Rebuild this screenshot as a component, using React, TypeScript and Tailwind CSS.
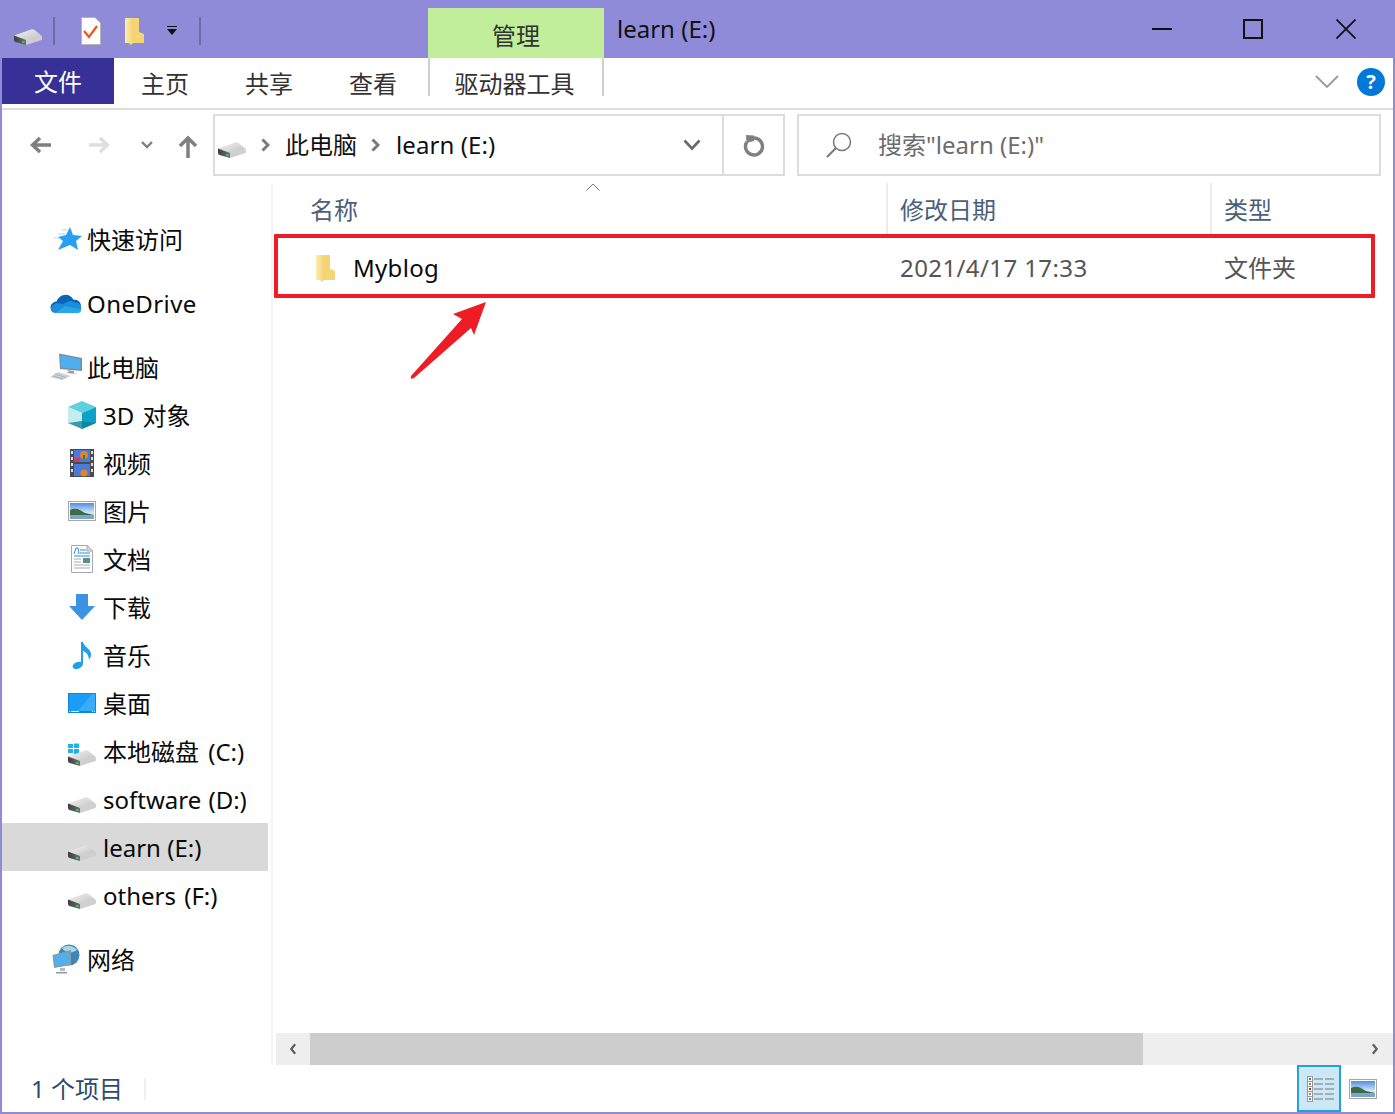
import React from "react";

const Drive = ({ className = "" }: { className?: string }) => (
  <svg viewBox="0 0 28 16" className={`w-[28px] h-[16px] shrink-0 ${className}`}>
    <defs>
      <linearGradient id="dtop" x1="0" y1="0" x2="1" y2="1">
        <stop offset="0" stopColor="#f4f4f4" />
        <stop offset="1" stopColor="#bdbdbd" />
      </linearGradient>
      <linearGradient id="dfront" x1="0" y1="0" x2="1" y2="0">
        <stop offset="0" stopColor="#3e3e3e" />
        <stop offset="1" stopColor="#6e6e6e" />
      </linearGradient>
    </defs>
    <path d="M0 6.500 L17 0.500 Q19 0 20.500 1 L28 7 L12 12 Z" fill="url(#dtop)" />
    <path d="M0 6.500 L12 11 V16 L1.500 13 Q0 12.500 0 11 Z" fill="url(#dfront)" />
    <path d="M12 11 L28 7 V10 Q28 11 26 11.500 L12 16 Z" fill="#cfcfcf" />
    <rect x="8" y="12" width="2.500" height="2" fill="#36c75a" />
  </svg>
);

const Folder = ({ className = "" }: { className?: string }) => (
  <svg viewBox="0 0 20 28" className={`shrink-0 ${className}`}>
    <defs>
      <linearGradient id="fold" x1="0" y1="0" x2="1" y2="0">
        <stop offset="0" stopColor="#fdeeb0" />
        <stop offset="1" stopColor="#f3cf6c" />
      </linearGradient>
    </defs>
    <path d="M7 1 H14 V15 L19 17 V26 H7 Z" fill="#f5d473" />
    <path d="M0 1 H8 L9 25 L6 28 L4 26 H0 Z" fill="url(#fold)" />
  </svg>
);

const Star = () => (
  <svg viewBox="0 0 30 24" className="w-[30px] h-[24px] ml-[3px]">
    <path d="M17 0 L20 8 L29 9 L23 14 L25 23 L17 18 L5 23 L10 14 L5 10 L13 8 Z" fill="#2a9ff0" />
    <path d="M9 3h5M5 7h7M1 11h5" stroke="#a9d6f6" strokeWidth="1" />
  </svg>
);

const Cloud = () => (
  <svg viewBox="0 0 34 22" className="w-[32px] h-[21px]">
    <path d="M7 9 C9 2 20 -2 25 7 C30 7 32 9 33 13 L16 20 L4 20 C-1 19 -1 10 7 9 Z" fill="#0a64b8" />
    <path d="M14 12 C18 8 23 7 26 10 C31 10 34 13 33 17 C33 20 31 21 28 21 L6 21 C1 21 0 17 2 14 C5 10 10 10 14 12 Z" fill="#1a8fdc" />
    <path d="M6 21 L28 21 C31 21 33 20 33 17 L16 14 Z" fill="#2ba6ea" />
  </svg>
);

const Pc = () => (
  <svg viewBox="0 0 32 28" className="w-[32px] h-[28px]">
    <path d="M9 0.500 L32 5 V18 L10 16 Z" fill="#7d8a96" />
    <path d="M10 2 L30.500 6 V16.500 L11 14.500 Z" fill="#4eaff0" />
    <path d="M17 17 L24 18 V20 L27 21 L16 20 L19 19 Z" fill="#9aa0a6" />
    <path d="M8 19 L21 23 L12 27 L0 24 Z" fill="#cfd3d6" />
    <path d="M5 21 L16 24.500 M3 23 L13 26" stroke="#a9aeb3" strokeWidth="1" />
  </svg>
);

const Cube = () => (
  <svg viewBox="0 0 28 28" className="w-[28px] h-[28px]">
    <path d="M14 0 L28 6 L14 12 L0 6 Z" fill="#5fd0de" />
    <path d="M0 6 L14 12 V28 L0 22 Z" fill="#c3edef" />
    <path d="M14 12 L28 6 V22 L14 28 Z" fill="#0da3c8" />
    <path d="M14 20 L28 22 L14 28 L0 22 Z" fill="#0b7d98" opacity=".75" />
  </svg>
);

const Film = () => (
  <svg viewBox="0 0 24 28" className="w-[24px] h-[28px]">
    <rect width="24" height="28" fill="#4b4b4b" />
    <path d="M1 2h2v3H1zM1 8h2v3H1zM1 14h2v3H1zM1 20h2v3H1zM21 2h2v3h-2zM21 8h2v3h-2zM21 14h2v3h-2zM21 20h2v3h-2z" fill="#ddd" />
    <rect x="4" y="1" width="16" height="12" fill="#4b7bd8" />
    <rect x="4" y="15" width="16" height="12" fill="#4b7bd8" />
    <circle cx="14" cy="6" r="4" fill="#e0852a" />
    <path d="M13 6h2v4h-2z" fill="#2e7d3a" />
    <circle cx="14" cy="24" r="3.500" fill="#e0852a" />
    <rect x="4" y="9" width="6" height="4" fill="#c83d6a" />
  </svg>
);

const Picture = () => (
  <svg viewBox="0 0 28 20" className="w-[28px] h-[20px]">
    <defs>
      <linearGradient id="sky" x1="0" y1="0" x2="0" y2="1">
        <stop offset="0" stopColor="#4f8fe0" />
        <stop offset=".6" stopColor="#cfe4f6" />
      </linearGradient>
    </defs>
    <rect x=".5" y=".5" width="27" height="19" fill="#fff" stroke="#a6a6a6" />
    <rect x="2" y="2" width="24" height="16" fill="url(#sky)" />
    <path d="M2 9 C8 6 12 9 17 12 L26 14 H2 Z" fill="#3c6a4a" />
    <rect x="2" y="14" width="24" height="4" fill="#7da5ca" />
  </svg>
);

const Doc = () => (
  <svg viewBox="0 0 22 28" className="w-[22px] h-[28px]">
    <path d="M.5 .5 H16 L21.500 6 V27.500 H.5 Z" fill="#fff" stroke="#a8a8a8" />
    <path d="M16 .5 V6 H21.500 Z" fill="#ddd" stroke="#a8a8a8" />
    <path d="M3 9 L5 3 H7 L8 9" fill="none" stroke="#2a8fe0" strokeWidth="1" />
    <path d="M9 5h6M9 8h10M3 11h16" stroke="#2a8fe0" strokeWidth="1" />
    <path d="M3 14h7M3 17h7M3 20h16M3 23h16" stroke="#aaa" strokeWidth="1" />
    <rect x="12" y="13" width="7" height="5" fill="#5b8f86" />
  </svg>
);

const Down = () => (
  <svg viewBox="0 0 26 26" className="w-[26px] h-[26px]">
    <path d="M7 0 H19 V12 H26 L13 26 L0 12 H7 Z" fill="#3d93e3" />
  </svg>
);

const Note = () => (
  <svg viewBox="0 0 20 28" className="w-[20px] h-[28px]">
    <path d="M9 1 H11 C12 6 19 8 19 13 C19 16 18 17 17 19 C17 14 14 11 11 10 V22 C11 26 7 28 4 28 C1 28 0 26 1 24 C2 22 6 20 9 21 Z" fill="#1ea0ea" />
  </svg>
);

const Desk = () => (
  <svg viewBox="0 0 28 20" className="w-[28px] h-[20px]">
    <rect width="28" height="20" fill="#0f86d8" />
    <rect x="1" y="1" width="26" height="17" fill="#1a9cf7" />
    <path d="M10 18 L24 1 H27 V18 Z" fill="#3bacf9" />
    <path d="M1 18.500h1M3 18.500h8M24 18.500h1M26 18.500h1" stroke="#fff" strokeWidth="1" />
  </svg>
);

const WinDrive = () => (
  <div className="relative w-[28px] h-[28px] shrink-0">
    <svg viewBox="0 0 12 12" className="absolute left-0 top-[6px] w-[12px] h-[12px]">
      <path d="M0 1 H5 V5 H0 Z M6 0.500 H11 V5 H6 Z M0 6 H5 V10 H0 Z M6 6 H11 V11 H6 Z" fill="#17b4ee" />
    </svg>
    <Drive className="absolute left-0 -bottom-[1px]" />
  </div>
);

const Net = () => (
  <svg viewBox="0 0 28 30" className="w-[28px] h-[30px] ml-[2px]">
    <circle cx="17" cy="11" r="10.500" fill="#3e86b8" />
    <path d="M10 4 C15 0 22 2 25 6 C20 10 13 9 10 4 Z" fill="#a9d4ea" />
    <path d="M0.500 11 L19 6 V21 L2 24 Z" fill="#8e99a2" />
    <path d="M2 12 L17.500 8 V19.500 L3 22.500 Z" fill="#4eb1ee" />
    <path d="M8 24 H13 V27 H8 Z" fill="#b6bcc2" />
    <path d="M4 28 H15 V29.500 H4 Z" fill="#8e99a2" />
  </svg>
);

const navItem = "flex items-center h-[48px] text-[24px] text-[#0a0a0a] leading-none";

const NavRow = ({
  icon,
  label,
  sub,
  selected,
  labelClass = "",
}: {
  icon: React.ReactNode;
  label: string;
  sub?: boolean;
  selected?: boolean;
  labelClass?: string;
}) => (
  <div className={`${navItem} ${selected ? "bg-[#d9d9d9]" : ""} ${sub ? "pl-[66px]" : "pl-[48px]"}`}>
    <div className={`h-[32px] flex items-center shrink-0 ${sub ? "w-[28px] mr-[7px] justify-center" : "w-[37px] justify-start"}`}>
      {icon}
    </div>
    <span className={`whitespace-nowrap pt-[2px] ${labelClass}`}>{label}</span>
  </div>
);

const BackArrow = ({ color, flip }: { color: string; flip?: boolean }) => (
  <svg viewBox="0 0 24 20" className={`w-[24px] h-[20px] ${flip ? "-scale-x-100" : ""}`}>
    <path d="M22 10 H4 M11 3 L3.500 10 L11 17" fill="none" stroke={color} strokeWidth="3.500" />
  </svg>
);

const Chevron = ({ className = "" }: { className?: string }) => (
  <svg viewBox="0 0 9 14" className={`w-[9px] h-[14px] ${className}`}>
    <path d="M1.500 1.500 L7 7 L1.500 12.500" fill="none" stroke="#7a7a7a" strokeWidth="3" />
  </svg>
);

export default function App() {
  return (
    <div className="relative w-[1395px] h-[1114px] flex flex-col overflow-hidden bg-white border-l-2 border-r-2 border-b-2 border-[#8f8bd9] font-['Noto_Sans','Noto_Sans_CJK_SC',sans-serif]">
      {/* Title bar */}
      <div className="h-[58px] -mx-[2px] bg-[#8f8bd9] flex items-end shrink-0">
        <div className="w-[428px] h-full flex items-center shrink-0 pt-[4px]">
          <Drive className="ml-[14px] mt-[12px]" />
          <div className="ml-[11px] w-[2px] h-[28px] bg-[#6e6ba8]" />
          <svg viewBox="0 0 20 28" className="ml-[26px] w-[20px] h-[28px]">
            <path d="M.5 .5 H14 L19.500 6 V27.500 H.5 Z" fill="#fff" stroke="#b5b5b5" />
            <path d="M3 14 L8 20 L16 9" fill="none" stroke="#f0531c" strokeWidth="2.200" />
          </svg>
          <Folder className="ml-[24px] w-[20px] h-[28px]" />
          <svg viewBox="0 0 12 10" className="ml-[21px] w-[12px] h-[10px]">
            <path d="M1 0.500 H11" stroke="#111" strokeWidth="1" />
            <path d="M1 3 H11 L6 9 Z" fill="#111" />
          </svg>
          <div className="ml-[21px] w-[2px] h-[28px] bg-[#6e6ba8]" />
        </div>
        <div className="w-[176px] h-[50px] bg-[#c0ee9a] flex items-center justify-center text-[24px] text-[#333] shrink-0 pt-[5px]">
          管理
        </div>
        <div className="h-full flex items-center pl-[13px] text-[24px] text-[#111] flex-1">learn (E:)</div>
        <div className="h-full flex items-center pr-[39px]">
          <svg viewBox="0 0 20 20" className="w-[20px] h-[20px]">
            <path d="M0 10 H20" stroke="#111" strokeWidth="2" />
          </svg>
          <svg viewBox="0 0 20 20" className="ml-[71px] w-[20px] h-[20px]">
            <rect x="1" y="1" width="18" height="18" fill="none" stroke="#111" strokeWidth="2" />
          </svg>
          <svg viewBox="0 0 20 20" className="ml-[73px] w-[20px] h-[20px]">
            <path d="M0.500 0.500 L19.500 19.500 M19.500 0.500 L0.500 19.500" stroke="#111" strokeWidth="1.800" />
          </svg>
        </div>
      </div>

      {/* Ribbon tabs */}
      <div className="h-[52px] flex items-start shrink-0 border-b-2 border-[#dcdcdc] text-[24px] text-[#333]">
        <div className="w-[112px] h-[46px] pt-[2px] bg-[#373096] text-white flex items-center justify-center">文件</div>
        <div className="w-[102px] h-[50px] pt-[2px] flex items-center justify-center">主页</div>
        <div className="w-[106px] h-[50px] pt-[2px] flex items-center justify-center">共享</div>
        <div className="w-[102px] h-[50px] pt-[2px] flex items-center justify-center">查看</div>
        <div className="ml-[4px] w-[176px] h-[38px] border-x-2 border-[#d0d0d0] flex items-start justify-center pt-[7px] pr-[3px] overflow-visible">
          <span className="leading-[38px] whitespace-nowrap">驱动器工具</span>
        </div>
        <div className="flex-1 h-[48px] flex items-center justify-end pr-[8px] gap-[18px]">
          <svg viewBox="0 0 24 14" className="w-[24px] h-[14px]">
            <path d="M1 1 L12 12 L23 1" fill="none" stroke="#999" strokeWidth="1.800" />
          </svg>
          <div className="w-[28px] h-[28px] rounded-full bg-[#0078d7] text-white flex items-center justify-center text-[20px] font-bold leading-none">
            ?
          </div>
        </div>
      </div>

      {/* Address row */}
      <div className="h-[73px] flex items-start pt-[4px] shrink-0">
        <div className="w-[211px] h-[62px] flex items-center shrink-0">
          <div className="ml-[27px]"><BackArrow color="#808080" /></div>
          <div className="ml-[34px]"><BackArrow color="#dedede" flip /></div>
          <svg viewBox="0 0 12 8" className="ml-[30px] w-[12px] h-[8px]">
            <path d="M1 1 L6 6 L11 1" fill="none" stroke="#808080" strokeWidth="2.400" />
          </svg>
          <svg viewBox="0 0 20 24" className="ml-[25px] w-[20px] h-[24px] mt-[3px]">
            <path d="M10 23 V4 M2 11 L10 3 L18 11" fill="none" stroke="#808080" strokeWidth="3.500" />
          </svg>
        </div>
        <div className="w-[572px] h-[62px] border-2 border-[#dcdcdc] flex items-center shrink-0">
          <Drive className="ml-[3px] mt-[10px]" />
          <Chevron className="ml-[15px]" />
          <span className="ml-[15px] text-[24px] text-[#111]">此电脑</span>
          <Chevron className="ml-[14px]" />
          <span className="ml-[16px] text-[24px] text-[#111] tracking-[0.1px]">learn (E:)</span>
          <svg viewBox="0 0 18 12" className="ml-auto mr-[21px] w-[18px] h-[12px]">
            <path d="M1.500 1.500 L9 9.500 L16.500 1.500" fill="none" stroke="#6a6a6a" strokeWidth="2.600" />
          </svg>
          <div className="w-[61px] h-full border-l-2 border-[#dcdcdc] flex items-center justify-center">
            <svg viewBox="0 0 22 24" className="w-[22px] h-[24px]">
              <path d="M11 5 A8.500 8.500 0 1 1 3.800 9" fill="none" stroke="#808080" strokeWidth="3.400" />
              <path d="M3 2 L11 2.500 V8 L3.500 10 Z" fill="#808080" />
            </svg>
          </div>
        </div>
        <div className="ml-[12px] w-[584px] h-[62px] border-2 border-[#dcdcdc] flex items-center shrink-0">
          <svg viewBox="0 0 26 26" className="ml-[27px] w-[26px] h-[26px]">
            <circle cx="16" cy="10" r="8.500" fill="none" stroke="#777" strokeWidth="1.500" />
            <path d="M10 16 L1 25" stroke="#777" strokeWidth="2" />
          </svg>
          <span className="ml-[26px] text-[24px] text-[#6d6d6d]">搜索"learn (E:)"</span>
        </div>
      </div>

      {/* Body */}
      <div className="flex-1 flex min-h-0">
        <div className="w-[266px] pt-[32px] flex flex-col shrink-0">
          <NavRow icon={<Star />} label="快速访问" />
          <div className="h-[16px]" />
          <NavRow icon={<Cloud />} label="OneDrive" labelClass="tracking-[0.4px]" />
          <div className="h-[16px]" />
          <NavRow icon={<Pc />} label="此电脑" />
          <NavRow sub icon={<Cube />} label="3D 对象" labelClass="[word-spacing:2px]" />
          <NavRow sub icon={<Film />} label="视频" />
          <NavRow sub icon={<Picture />} label="图片" />
          <NavRow sub icon={<Doc />} label="文档" />
          <NavRow sub icon={<Down />} label="下载" />
          <NavRow sub icon={<Note />} label="音乐" />
          <NavRow sub icon={<Desk />} label="桌面" />
          <NavRow sub icon={<WinDrive />} label="本地磁盘 (C:)" labelClass="[word-spacing:3px]" />
          <NavRow sub icon={<Drive className="mt-[12px]" />} label="software (D:)" labelClass="[word-spacing:1px]" />
          <NavRow sub selected icon={<Drive className="mt-[12px]" />} label="learn (E:)" />
          <NavRow sub icon={<Drive className="mt-[12px]" />} label="others (F:)" labelClass="[word-spacing:2px]" />
          <div className="h-[16px]" />
          <NavRow icon={<Net />} label="网络" />
        </div>
        <div className="w-[3px] shrink-0" />
        <div className="w-[2px] shrink-0 bg-[#f4f4f4] h-[882px]" />
        <div className="w-[3px] shrink-0" />

        <div className="flex-1 min-w-0 flex flex-col">
          {/* Column headers */}
          <div className="relative h-[51px] flex shrink-0 text-[24px] text-[#4c607a]">
            <div className="w-[612px] flex items-center pl-[34px] pt-[3px] border-r-2 border-[#ececec]">名称</div>
            <div className="w-[324px] flex items-center pl-[12px] pt-[3px] border-r-2 border-[#ececec]">修改日期</div>
            <div className="flex-1 flex items-center pl-[12px] pt-[3px]">类型</div>
            <svg viewBox="0 0 14 8" className="absolute left-[310px] top-[0px] w-[14px] h-[8px]">
              <path d="M0.500 7.500 L7 1 L13.500 7.500" fill="none" stroke="#777" strokeWidth="1" />
            </svg>
          </div>
          {/* File row */}
          <div className="h-[66px] flex items-center shrink-0 text-[24px] text-[#555] pt-[2px]">
            <div className="w-[612px] flex items-center pl-[40px]">
              <Folder className="w-[20px] h-[28px]" />
              <span className="ml-[17px] text-[#0a0a0a] tracking-[0.3px]">Myblog</span>
            </div>
            <div className="w-[324px] pl-[12px] tracking-[0.4px]">2021/4/17 17:33</div>
            <div className="pl-[12px]">文件夹</div>
          </div>
          <div className="flex-1" />
          {/* Horizontal scrollbar */}
          <div className="h-[32px] bg-[#eeeeee] flex items-stretch shrink-0">
            <div className="w-[34px] flex items-center justify-center">
              <svg viewBox="0 0 8 14" className="w-[8px] h-[12px] rotate-180">
                <path d="M1.500 1.500 L6 7 L1.500 12.500" fill="none" stroke="#5f5f5f" strokeWidth="2.600" />
              </svg>
            </div>
            <div className="w-[833px] bg-[#cdcdcd]" />
            <div className="flex-1 flex items-center justify-end pr-[14px]">
              <svg viewBox="0 0 8 14" className="w-[8px] h-[12px]">
                <path d="M1.500 1.500 L6 7 L1.500 12.500" fill="none" stroke="#5f5f5f" strokeWidth="2.600" />
              </svg>
            </div>
          </div>
        </div>
      </div>

      {/* Status bar */}
      <div className="h-[47px] flex items-center shrink-0 text-[24px] text-[#2d4a6b]">
        <span className="ml-[29px] whitespace-nowrap pt-[1px]">1 个项目</span>
        <div className="ml-[21px] w-[2px] h-[22px] bg-[#f0f0f0]" />
        <div className="ml-auto mr-[52px] w-[44px] h-full bg-[#cce8f6] border-2 border-[#26a0da] flex items-center justify-center">
          <svg viewBox="0 0 28 26" className="w-[28px] h-[26px] ml-[3px]">
            <rect x=".5" y=".5" width="5" height="25" fill="#fff" stroke="#999" />
            <path d="M1 5.500h5M1 10.500h5M1 15.500h5M1 20.500h5" stroke="#999" />
            <rect x="2" y="2" width="2" height="2" fill="#3f7fb0" />
            <rect x="2" y="7" width="2" height="2" fill="#a08a40" />
            <rect x="2" y="12" width="2" height="2" fill="#b03020" />
            <rect x="2" y="17" width="2" height="2" fill="#8a9a70" />
            <rect x="2" y="22" width="2" height="2" fill="#3f7fb0" />
            <path d="M7 3h9M18 3h9M7 8h9M18 8h9M7 13h9M18 13h9M7 18h9M18 18h9M7 23h9M18 23h9" stroke="#777" strokeWidth="1" />
          </svg>
        </div>
        <div className="absolute right-[16px] bottom-[13px]"><Picture /></div>
      </div>

      {/* Annotation overlay */}
      <div className="absolute left-[272px] top-[234px] w-[1101px] h-[64px] border-[4px] border-[#ee1c25] rounded-[1px]" />
      <svg viewBox="0 0 80 80" className="absolute left-[406px] top-[302px] w-[80px] h-[80px]">
        <path d="M78 0 L45 12 L54 17 L3 74 Q2 78 6 76 L63 26 L66 33 Z" fill="#ee1c25" />
      </svg>
    </div>
  );
}
